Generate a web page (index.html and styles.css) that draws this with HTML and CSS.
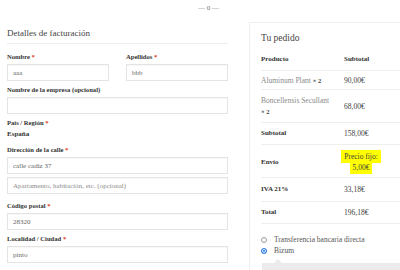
FILE: index.html
```html
<!DOCTYPE html>
<html lang="es">
  <head>
    <meta charset="UTF-8" />
    <meta name="viewport" content="width=device-width, initial-scale=1.0" />
    <title>Finalizar compra</title>
    <link rel="stylesheet" href="styles.css">
  </head>
  <body>
    <div class="divider-mark">— 0 —</div>

    <div class="checkout">
      <div class="billing">
        <h3 class="section-title">Detalles de facturación</h3>

        <div class="field-row">
          <p class="field half">
            <label class="field-label">Nombre <span class="required">*</span></label>
            <input class="input" type="text" value="aaa">
          </p>
          <p class="field half">
            <label class="field-label">Apellidos <span class="required">*</span></label>
            <input class="input" type="text" value="bbb">
          </p>
        </div>

        <p class="field">
          <label class="field-label">Nombre de la empresa (opcional)</label>
          <input class="input" type="text" value="">
        </p>

        <p class="field country-field">
          <label class="field-label">País / Región <span class="required">*</span></label>
          <strong class="country">España</strong>
        </p>

        <p class="field">
          <label class="field-label">Dirección de la calle <span class="required">*</span></label>
          <input class="input" type="text" value="calle cadiz 37">
        </p>
        <p class="field address-extra">
          <input class="input" type="text" placeholder="Apartamento, habitación, etc. (opcional)">
        </p>

        <p class="field">
          <label class="field-label">Código postal <span class="required">*</span></label>
          <input class="input" type="text" value="28320">
        </p>

        <p class="field">
          <label class="field-label">Localidad / Ciudad <span class="required">*</span></label>
          <input class="input" type="text" value="pinto">
        </p>
      </div>

      <div class="order">
        <h3 class="order-title">Tu pedido</h3>

        <table class="order-table">
          <thead>
            <tr class="row-head">
              <th class="col-name">Producto</th>
              <th class="col-total">Subtotal</th>
            </tr>
          </thead>
          <tbody>
            <tr class="row-item-first">
              <td class="col-name product-name">Aluminum Plant <strong class="qty">×&nbsp;2</strong></td>
              <td class="col-total">90,00€</td>
            </tr>
            <tr class="row-item">
              <td class="col-name product-name">Boncellensis Secullant <strong class="qty">×&nbsp;2</strong></td>
              <td class="col-total">68,00€</td>
            </tr>
          </tbody>
          <tfoot>
            <tr class="row-subtotal">
              <th class="col-name">Subtotal</th>
              <td class="col-total">158,00€</td>
            </tr>
            <tr class="row-shipping">
              <th class="col-name">Envío</th>
              <td class="col-total">
                <div class="shipping-method"><mark class="highlight">Precio fijo: 5,00€</mark></div>
              </td>
            </tr>
            <tr class="row-tax">
              <th class="col-name">IVA 21%</th>
              <td class="col-total">33,18€</td>
            </tr>
            <tr class="row-total">
              <th class="col-name">Total</th>
              <td class="col-total">196,18€</td>
            </tr>
          </tfoot>
        </table>

        <ul class="payment-methods">
          <li class="payment-method">
            <span class="radio"></span>
            <span>Transferencia bancaria directa</span>
          </li>
          <li class="payment-method">
            <span class="radio radio-checked"></span>
            <span>Bizum</span>
          </li>
        </ul>
        <div class="payment-box"></div>
      </div>
    </div>
  </body>
</html>
```

FILE: styles.css
```css
* {
  margin: 0;
  padding: 0;
  box-sizing: border-box;
}

html,
body {
  overflow: hidden;
}

body {
  width: 400px;
  height: 270px;
  background-color: #fff;
  font-family: "Liberation Serif", "Times New Roman", serif;
  font-size: 7.5px;
  color: #404040;
}

.divider-mark {
  height: 22px;
  padding-top: 3px;
  padding-left: 198px;
  font-size: 7px;
  line-height: 10px;
  color: #777;
}

.checkout {
  display: flex;
  gap: 21px;
  width: 470px;
  padding-left: 7px;
}

/* billing column */

.billing {
  flex: 0 0 221px;
  padding-top: 5px;
}

.section-title {
  font-size: 9px;
  font-weight: normal;
  line-height: 12px;
  color: #444;
  padding-bottom: 4px;
  border-bottom: 1px solid #eee;
  margin-bottom: 8px;
}

.field-row {
  display: flex;
  gap: 17px;
}

.half {
  flex: 1;
}

.field {
  margin-bottom: 4px;
}

.field-label {
  display: block;
  font-size: 6.6px;
  font-weight: bold;
  line-height: 10px;
  color: #333;
  margin-bottom: 2px;
}

.required {
  color: #e2401c;
}

.input {
  display: block;
  width: 100%;
  height: 17px;
  padding: 0 5px;
  border: 1px solid #e4e4e4;
  background-color: #fff;
  box-shadow: inset 0 1px 1px rgba(0, 0, 0, 0.03);
  font-family: inherit;
  font-size: 7px;
  color: #666;
  outline: none;
}

.input::placeholder {
  color: #8a8a8a;
}

.country-field {
  margin-top: 1px;
  margin-bottom: 5px;
}

.country-field .field-label {
  margin-bottom: 0;
}

.country {
  display: block;
  font-size: 7px;
  line-height: 12px;
  color: #333;
}

.address-extra {
  margin-top: -1px;
  margin-bottom: 7px;
}

/* order column */

.order {
  flex: 0 0 200px;
  border: 1px solid #eee;
  padding: 9px 0 0 11px;
}

.order-title {
  font-size: 9.5px;
  font-weight: normal;
  line-height: 12px;
  color: #444;
  margin-bottom: 5px;
}

.order-table {
  width: 100%;
  border-collapse: collapse;
  line-height: 11px;
}

.order-table th,
.order-table td {
  text-align: left;
  vertical-align: middle;
  border-bottom: 1px solid #eee;
  padding: 5px 0;
  color: #404040;
}

.order-table th {
  font-size: 7px;
  font-weight: bold;
  color: #333;
}

.col-name {
  width: 83px;
  padding-right: 12px !important;
}

.product-name {
  color: #8a8a8a !important;
}

.qty {
  font-size: 6.5px;
  color: #444;
}

.row-item-first td {
  padding: 4px 0 3px;
}

.row-shipping th,
.row-shipping td {
  padding: 6px 0 4px;
}

.row-tax th,
.row-tax td {
  padding: 6px 0;
}

.shipping-method {
  width: 44px;
  margin-left: -5px;
  text-align: center;
}

.highlight {
  background-color: #ffff00;
  color: #404040;
  padding: 2px 3px;
  box-decoration-break: clone;
  -webkit-box-decoration-break: clone;
}

.payment-methods {
  list-style: none;
  margin-top: 10px;
  color: #555;
  line-height: 11px;
}

.payment-method {
  display: flex;
  align-items: center;
  gap: 7px;
}

.radio {
  width: 6px;
  height: 6px;
  border: 1px solid #9a9a9a;
  border-radius: 50%;
  background-color: #fff;
}

.radio-checked {
  border-color: #2b7de9;
  background-color: #2b7de9;
  box-shadow: inset 0 0 0 1px #fff;
}

.payment-box {
  position: relative;
  height: 20px;
  margin-top: 7px;
  margin-left: 1px;
  background-color: #ebebeb;
}

.payment-box::before {
  content: "";
  position: absolute;
  top: -4px;
  left: 12px;
  border-left: 4px solid transparent;
  border-right: 4px solid transparent;
  border-bottom: 4px solid #ebebeb;
}
```
